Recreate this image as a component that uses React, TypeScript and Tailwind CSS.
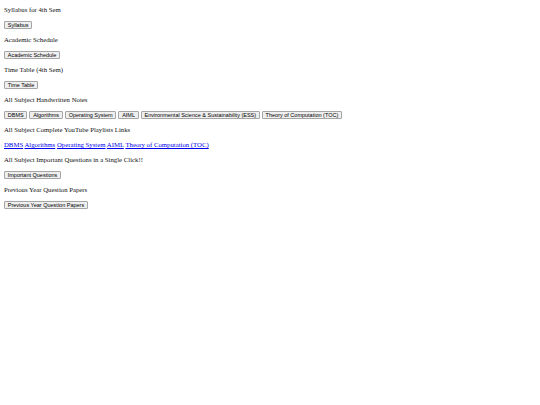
import React from "react";

const notes = [
  "DBMS",
  "Algorithms",
  "Operating System",
  "AIML",
  "Environmental Science & Sustainability (ESS)",
  "Theory of Computation (TOC)",
];

const playlists = ["DBMS", "Algorithms", "Operating System", "AIML", "Theory of Computation (TOC)"];

function Heading({ children }: { children: React.ReactNode }) {
  return (
    <p className="h-[8px] text-[6.75px] leading-[8px] text-[#111] whitespace-nowrap" style={{ fontFamily: '"Liberation Serif", serif' }}>
      {children}
    </p>
  );
}

function Btn({ children }: { children: React.ReactNode }) {
  return (
    <button
      className="h-[8px] px-[2.75px] bg-[#efefef] border border-[#a5a5a5] rounded-[1px] text-[5.5px] leading-[6px] text-black whitespace-nowrap"
      style={{ fontFamily: '"Liberation Sans", Arial, sans-serif' }}
    >
      {children}
    </button>
  );
}

export default function App() {
  return (
    <div className="w-[540px] h-[405px] bg-white px-[4px] pt-[6px] flex flex-col gap-[7px] items-start">
      <Heading>Syllabus for 4th Sem</Heading>
      <Btn>Syllabus</Btn>
      <Heading>Academic Schedule</Heading>
      <Btn>Academic Schedule</Btn>
      <Heading>Time Table (4th Sem)</Heading>
      <Btn>Time Table</Btn>
      <Heading>All Subject Handwritten Notes</Heading>
      <div className="flex gap-[2px]">
        {notes.map((n) => (
          <Btn key={n}>{n}</Btn>
        ))}
      </div>
      <Heading>All Subject Complete YouTube Playlists Links</Heading>
      <p className="h-[8px] text-[6.75px] leading-[8px] whitespace-nowrap" style={{ fontFamily: '"Liberation Serif", serif' }}>
        {playlists.map((p, i) => (
          <React.Fragment key={p}>
            <a href="#" className="text-[#0000ee] underline">
              {p}
            </a>
            {i < playlists.length - 1 ? " " : ""}
          </React.Fragment>
        ))}
      </p>
      <Heading>All Subject Important Questions in a Single Click!!</Heading>
      <Btn>Important Questions</Btn>
      <Heading>Previous Year Question Papers</Heading>
      <Btn>Previous Year Question Papers</Btn>
    </div>
  );
}
